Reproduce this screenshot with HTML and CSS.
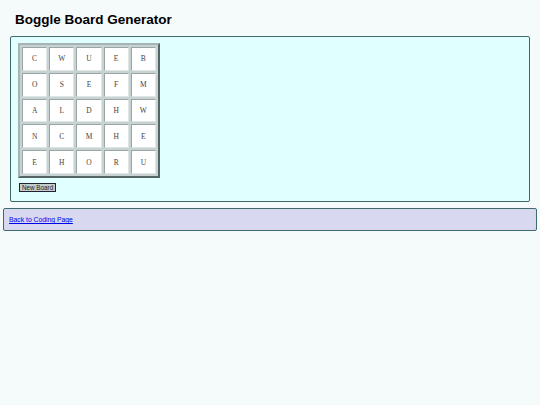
FILE: index.html
```html
<!DOCTYPE html>
<html>
<head>
<meta charset="utf-8">
<link rel="stylesheet" href="styles.css">
</head>
<body>
<h1 class="title">Boggle Board Generator</h1>
<div class="panel">
  <table class="board">
    <tr><td>C</td><td>W</td><td>U</td><td>E</td><td>B</td></tr>
    <tr><td>O</td><td>S</td><td>E</td><td>F</td><td>M</td></tr>
    <tr><td>A</td><td>L</td><td>D</td><td>H</td><td>W</td></tr>
    <tr><td>N</td><td>C</td><td>M</td><td>H</td><td>E</td></tr>
    <tr><td>E</td><td>H</td><td>O</td><td>R</td><td>U</td></tr>
  </table>
  <button class="btn">New Board</button>
</div>
<div class="footer">
  <a href="#" class="back">Back to Coding Page</a>
</div>
</body>
</html>
```
FILE: styles.css
```css
html, body {
  margin: 0;
  padding: 0;
  background: #f5fafa;
  font-family: "Liberation Sans", Arial, sans-serif;
}
.title {
  font-size: 13.5px;
  font-weight: bold;
  margin: 0;
  padding: 12px 0 0 15px;
  height: 24px;
  color: #000;
}
.panel {
  margin: 0 10px;
  background: #e0ffff;
  border: 1px solid #3f6b6b;
  border-radius: 2px;
  padding: 6px 7px 8px 7px;
  height: 150px;
  box-sizing: content-box;
}
.board {
  width: 142px;
  height: 135px;
  table-layout: fixed;
  border-style: solid;
  border-width: 2px;
  border-color: #a8b4b4 #556565 #556565 #a8b4b4;
  border-spacing: 2px;
  background: #c8d2d2;
}
.board td {
  border-style: solid;
  border-width: 1px;
  border-color: #98a6a6 #dfe6e6 #dfe6e6 #98a6a6;
  padding: 0;
  text-align: center;
  vertical-align: middle;
  font-family: "Liberation Serif", "Times New Roman", serif;
  font-size: 7.5px;
  color: #444;
  background: #fff;
}
.btn {
  display: block;
  margin: 5px 0 0 1px;
  font-family: "Liberation Sans", Arial, sans-serif;
  font-size: 6.3px;
  padding: 0 2px;
  height: 9px;
  line-height: 7px;
  background: #c4cccc;
  border: 1px solid #223;
  color: #222;
}
.footer {
  margin: 6px 3px 0 3px;
  background: #d8d8f0;
  border: 1px solid #3f6b6b;
  border-radius: 2px;
  height: 21px;
  padding: 0 5px;
  display: flex;
  align-items: center;
}
.back {
  font-size: 6.8px;
  color: #0000ee;
}
```
